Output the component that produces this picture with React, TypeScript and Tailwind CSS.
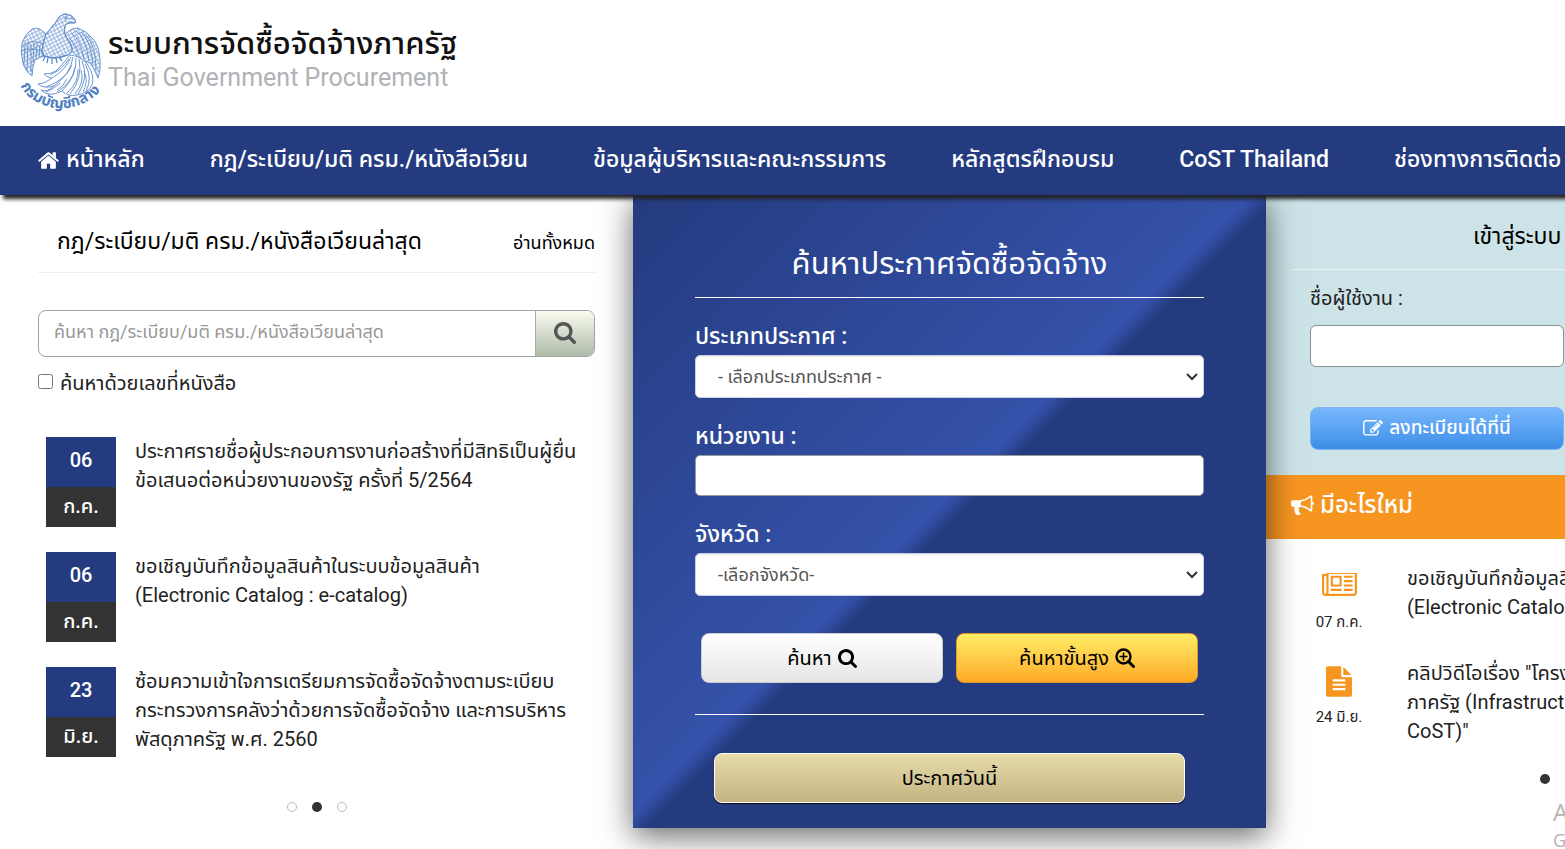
import type { ReactNode } from "react";

const ICONS = {
  home: {
    box: "0 0 1792 1792",
    d: "M1472 992v480q0 26-19 45t-45 19h-384v-384h-256v384h-384q-26 0-45-19t-19-45v-480q0-1 .5-3t.5-3l575-474 575 474q1 2 1 6zm223-69l-62 74q-8 9-21 11h-3q-13 0-21-7l-692-577-692 577q-12 8-24 7-13-2-21-11l-62-74q-8-10-7-23.500t11-21.500l719-599q32-26 76-26t76 26l244 204v-195q0-14 9-23t23-9h192q14 0 23 9t9 23v408l219 182q10 8 11 21.500t-7 23.500z",
  },
  search: {
    box: "64 128 1664 1664",
    d: "M1216 832q0-185-131.500-316.500t-316.500-131.500-316.500 131.500-131.500 316.500 131.500 316.500 316.500 131.500 316.500-131.500 131.500-316.500zm512 832q0 52-38 90t-90 38q-54 0-90-38l-343-342q-179 124-399 124-143 0-273.500-55.500t-225-150-150-225-55.500-273.500 55.500-273.500 150-225 225-150 273.500-55.500 273.500 55.500 225 150 150 225 55.500 273.500q0 220-124 399l343 343q37 37 37 90z",
  },
  edit: {
    box: "0 128 1792 1536",
    d: "M888 1184l116-116-152-152-116 116v56h96v96h56zm440-720q-16-16-33 1l-350 350q-17 17-1 33t33-1l350-350q17-17 1-33zm80 594v190q0 119-84.500 203.500t-203.500 84.500h-832q-119 0-203.500-84.500t-84.500-203.500v-832q0-119 84.500-203.500t203.500-84.500h832q63 0 117 25 15 7 18 23 3 17-9 29l-49 49q-14 14-32 8-23-6-45-6h-832q-66 0-113 47t-47 113v832q0 66 47 113t113 47h832q66 0 113-47t47-113v-126q0-13 9-22l64-64q15-15 35-7t20 29zm-96-738l288 288-672 672h-288v-288zm444 132l-92 92-288-288 92-92q28-28 68-28t68 28l152 152q28 28 28 68t-28 68z",
  },
  bullhorn: {
    box: "0 128 1792 1600",
    d: "M1664 640q53 0 90.500 37.500t37.500 90.500-37.500 90.500-90.500 37.500v384q0 52-38 90t-90 38q-417-347-812-380-58 19-91 66t-31 100.500 40 92.500q-20 33-23 65.500t6 58 33.500 55 48 50 61.500 50.500q-29 58-111.500 83t-168.500 11.500-132-55.500q-7-23-29.500-87.500t-32-94.500-23-89-15-101 3.500-98.500 22-110.500h-122q-66 0-113-47t-47-113v-192q0-66 47-113t113-47h480q435 0 896-384 52 0 90 38t38 90v384zm-128 604v-954q-394 302-768 343v270q377 42 768 341z",
  },
  newspaper: {
    box: "0 256 2048 1408",
    d: "M1024 512h-384v384h384v-384zm128 640v128h-640v-128h640zm0-768v640h-640v-640h640zm640 768v128h-512v-128h512zm0-256v128h-512v-128h512zm0-256v128h-512v-128h512zm0-256v128h-512v-128h512zm-1536 992v-960h-128v960q0 26 19 45t45 19 45-19 19-45zm1664 0v-1088h-1536v1088q0 33-11 64h1483q26 0 45-19t19-45zm128-1216v1216q0 80-56 136t-136 56h-1664q-80 0-136-56t-56-136v-1088h256v-128h1792z",
  },
  file: {
    box: "128 0 1536 1792",
    d: "M1596 476q14 14 28 36h-472v-472q22 14 36 28zm-476 164h544v1056q0 40-28 68t-68 28h-1344q-40 0-68-28t-28-68v-1600q0-40 28-68t68-28h800v544q0 40 28 68t68 28zm160 736v-64q0-14-9-23t-23-9h-704q-14 0-23 9t-9 23v64q0 14 9 23t23 9h704q14 0 23-9t9-23zm0-256v-64q0-14-9-23t-23-9h-704q-14 0-23 9t-9 23v64q0 14 9 23t23 9h704q14 0 23-9t9-23zm0-256v-64q0-14-9-23t-23-9h-704q-14 0-23 9t-9 23v64q0 14 9 23t23 9h704q14 0 23-9t9-23z",
  },
};

function Icon({ name, className }: { name: keyof typeof ICONS; className: string }) {
  return (
    <svg viewBox={ICONS[name].box} className={className} fill="currentColor" aria-hidden="true">
      <path d={ICONS[name].d} />
    </svg>
  );
}

function SearchPlusIcon() {
  return (
    <svg viewBox="0 0 20 20" className="h-5 w-5" fill="none" stroke="currentColor" aria-hidden="true">
      <circle cx="8.500" cy="8.500" r="7" strokeWidth="2.400" />
      <path d="M13.500 13.500l5 5" strokeWidth="3" strokeLinecap="round" />
      <path d="M8.500 4.500v8M4.500 8.500h8" strokeWidth="1.600" />
    </svg>
  );
}

function Emblem() {
  return (
    <svg viewBox="0 0 110 115" className="h-[115px] w-[110px] shrink-0" fill="none" stroke="#5f8ccb" strokeWidth="0.9">
      <defs>
        <pattern id="scales" width="5" height="5" patternUnits="userSpaceOnUse" patternTransform="rotate(18)">
          <path d="M0 0q2.500 5 5 0M-2.500 2.500q2.500 5 5 0M2.500 2.500q2.500 5 5 0" strokeWidth="0.8" />
        </pattern>
        <path id="arc" d="M10 80Q17 93 31 99Q53 108 74 98Q92 89 101 72" />
      </defs>
      {/* wings */}
      <path d="M36 29Q29 21 22 24Q15 29 12 38Q10 47 13 58Q15 66 22 71L23 62L25 55L31 52L39 50L47 40Z" fill="url(#scales)" />
      <path d="M55 30Q60 23 68 23Q77 26 84 35Q90 44 90 56Q91 65 88 73L84 64L80 58L74 56L66 50L57 42Z" fill="url(#scales)" />
      <path d="M13 40Q21 34 34 39M12 46Q20 42 32 46M15 40l-1 19M18 38l-1 28M21 39l0 28M24 38l-1 20M27 39l-1 15M30 40l-1 12M33 40l-1 11" />
      <path d="M66 26Q76 33 79 56M71 27Q81 36 83 60M76 30Q86 40 86 66M62 28Q71 36 74 54M59 33Q67 40 69 50" />
      {/* head, neck and body */}
      <path d="M65 15Q62 9 54 9Q48 11 46 17Q41 23 36 29Q33 37 32 45L34 51Q46 55 58 50Q66 46 59 36Q53 29 55 21Q57 17 65 18Z" fill="#fff" />
      <path d="M65 15Q62 9 54 9Q48 11 46 17Q41 23 36 29Q33 37 32 45L34 51Q46 55 58 50Q66 46 59 36Q53 29 55 21Q57 17 65 18Z" fill="url(#scales)" />
      <path d="M58 14q4-1 7 1q0 2 0 3q-3-2-7-1" fill="#fff" />
      <circle cx="56" cy="13" r="0.9" fill="#5f8ccb" />
      {/* talons */}
      <path d="M33 50Q42 56 56 50M35 52l-2 4M38 53l-1 5M42 54l0 5M46 53l1 5M49 52l3 4" strokeWidth="1.300" />
      {/* tail plumes */}
      <path
        d="M60 50Q52 60 46 66Q41 69 34 69Q38 73 42 73Q35 79 28 79Q33 84 44 81Q37 88 31 85Q39 93 52 86Q58 92 67 90Q78 88 82 80Q85 72 78 60Q71 51 60 50Z"
        fill="#fff"
      />
      <path d="M61 52Q57 64 42 73M63 52Q61 68 44 81M66 53Q67 71 52 86M69 54Q73 73 60 89M72 56Q79 73 68 89M75 59Q83 73 76 86M59 54Q53 64 40 70M62 60Q57 74 36 82M65 62Q63 77 47 87M68 64Q69 77 57 88M71 65Q75 77 65 89M74 66Q79 76 73 87M50 78Q44 84 36 87M57 74Q53 82 47 85" />
      <text fill="#4f7fc2" stroke="none" fontSize="15" fontWeight="bold" fontFamily="'Noto Sans Thai', 'Noto Sans', sans-serif">
        <textPath href="#arc" startOffset="1">กรมบัญชีกลาง</textPath>
      </text>
    </svg>
  );
}

const NAV = [
  "กฎ/ระเบียบ/มติ ครม./หนังสือเวียน",
  "ข้อมูลผู้บริหารและคณะกรรมการ",
  "หลักสูตรฝึกอบรม",
  "CoST Thailand",
  "ช่องทางการติดต่อ",
];

const RULES = [
  { day: "06", month: "ก.ค.", lines: ["ประกาศรายชื่อผู้ประกอบการงานก่อสร้างที่มีสิทธิเป็นผู้ยื่น", "ข้อเสนอต่อหน่วยงานของรัฐ ครั้งที่ 5/2564"] },
  { day: "06", month: "ก.ค.", lines: ["ขอเชิญบันทึกข้อมูลสินค้าในระบบข้อมูลสินค้า", "(Electronic Catalog : e-catalog)"] },
  { day: "23", month: "มิ.ย.", lines: ["ซ้อมความเข้าใจการเตรียมการจัดซื้อจัดจ้างตามระเบียบ", "กระทรวงการคลังว่าด้วยการจัดซื้อจัดจ้าง และการบริหาร", "พัสดุภาครัฐ พ.ศ. 2560"] },
];

function Lines({ lines }: { lines: string[] }) {
  return (
    <a href="#" className="text-[20px] leading-[29px] whitespace-nowrap">
      {lines.map((line) => (
        <span key={line} className="block">
          {line}
        </span>
      ))}
    </a>
  );
}

function Field({ id, label, children }: { id: string; label: string; children: ReactNode }) {
  return (
    <div className="flex flex-col">
      <label htmlFor={id} className="text-[23px] leading-9 font-medium text-white">
        {label}
      </label>
      {children}
    </div>
  );
}

function Select({ id, option }: { id: string; option: string }) {
  return (
    <div className="relative">
      <select
        id={id}
        className="h-[43px] w-full appearance-none rounded-[5px] border border-[#ccd0e4] bg-white px-[22px] text-[18px] text-[#555] shadow-[inset_0_1px_1px_rgba(0,0,0,0.08)]"
      >
        <option>{option}</option>
      </select>
      <svg viewBox="0 0 12 8" className="pointer-events-none absolute top-[18px] right-[6px] h-2 w-3" fill="none" stroke="#333" strokeWidth="2">
        <path d="M1 1l5 5 5-5" />
      </svg>
    </div>
  );
}

export default function App() {
  return (
    <div className="min-h-screen overflow-hidden bg-white font-[Roboto,'Noto_Sans_Thai','Noto_Sans',sans-serif] text-[#222]">
      <div className="relative min-w-[1899px] pb-6">
        <header className="flex h-[126px] items-start pt-[5px] pl-[10px]">
          <Emblem />
          <div className="-ml-3 pt-5 whitespace-nowrap">
            <h1 className="text-[31px] leading-[38px] font-medium text-[#111]">ระบบการจัดซื้อจัดจ้างภาครัฐ</h1>
            <p className="text-[25px] leading-[30px] text-[#b1b2b6]">Thai Government Procurement</p>
          </div>
        </header>

        <nav className="relative z-20 flex h-[69px] items-center gap-[65px] bg-[#243b7f] pl-[37px] text-[23px] font-medium whitespace-nowrap text-white shadow-[3px_4px_4px_#222]">
          <a href="#" className="flex items-center gap-1.5">
            <Icon name="home" className="h-[23px] w-[23px]" />
            หน้าหลัก
          </a>
          {NAV.map((item) => (
            <a key={item} href="#">
              {item}
            </a>
          ))}
        </nav>

        <main className="grid grid-cols-3">
          {/* Latest rules */}
          <section className="px-[38px]">
            <div className="flex h-[78px] items-center justify-between border-b border-[#eee] pt-[18px] pl-[19px] whitespace-nowrap text-black">
              <h2 className="text-[23px]">กฎ/ระเบียบ/มติ ครม./หนังสือเวียนล่าสุด</h2>
              <a href="#" className="text-[18px]">อ่านทั้งหมด</a>
            </div>
            <form className="mt-[37px] flex h-[47px] overflow-hidden rounded-lg border border-[#a3a3a3]">
              <input
                aria-label="ค้นหา"
                placeholder="ค้นหา กฎ/ระเบียบ/มติ ครม./หนังสือเวียนล่าสุด"
                className="min-w-0 flex-1 px-[15px] pb-1 text-[18px] outline-none placeholder:text-[#999]"
              />
              <button type="button" aria-label="ค้นหา" className="flex w-[59px] items-center justify-center border-l border-[#aaa] bg-linear-to-b from-[#fafcf0] to-[#afbba9] pb-0.5 text-[#555]">
                <Icon name="search" className="h-[22px] w-[22px]" />
              </button>
            </form>
            <label className="mt-3 flex h-7 items-center gap-[7px] text-[20px]">
              <input type="checkbox" className="mb-1 h-[15px] w-[15px]" />
              ค้นหาด้วยเลขที่หนังสือ
            </label>
            <ul className="mt-10 flex flex-col gap-[25px] pl-2">
              {RULES.map((rule) => (
                <li key={rule.lines[0]} className="flex h-[90px] gap-[19px]">
                  <div className="flex w-[70px] shrink-0 flex-col text-center text-[20px] font-medium text-white">
                    <span className="flex h-[50px] items-center justify-center bg-[#243b7f] pb-1">{rule.day}</span>
                    <span className="flex h-10 items-center justify-center bg-[#333] pb-0.5">{rule.month}</span>
                  </div>
                  <Lines lines={rule.lines} />
                </li>
              ))}
            </ul>
            <div className="mt-[45px] flex justify-center gap-[15px]">
              <button type="button" aria-label="1" className="h-2.5 w-2.5 rounded-full border border-[#bbb]" />
              <button type="button" aria-label="2" className="h-2.5 w-2.5 rounded-full bg-[#333]" />
              <button type="button" aria-label="3" className="h-2.5 w-2.5 rounded-full border border-[#bbb]" />
            </div>
          </section>

          {/* Announcement search */}
          <section className="relative z-10 h-[633px] bg-[linear-gradient(135deg,#243b7f_0%,#3552aa_49%,#253b80_51%)] px-[62px] pt-[34px] shadow-[0_8px_30px_rgba(0,0,0,0.6)]">
            <h2 className="h-[69px] border-b border-white text-center text-[31px] leading-[70px] text-white">ค้นหาประกาศจัดซื้อจัดจ้าง</h2>
            <form className="mt-[21px] flex flex-col">
              <div className="flex flex-col gap-[21px]">
                <Field id="kind" label="ประเภทประกาศ :">
                  <Select id="kind" option="- เลือกประเภทประกาศ -" />
                </Field>
                <Field id="agency" label="หน่วยงาน :">
                  <input id="agency" className="h-[41px] rounded-[5px] border border-[#999] bg-white px-5 text-[18px]" />
                </Field>
                <Field id="province" label="จังหวัด :">
                  <Select id="province" option="-เลือกจังหวัด-" />
                </Field>
              </div>
              <div className="mt-[37px] grid grid-cols-2 gap-[13px] px-[6px] text-[20px] text-black">
                <button type="button" className="flex h-[50px] items-center justify-center gap-1.5 rounded-lg border border-[#ccc] bg-linear-to-b from-white to-[#e6e6e6]">
                  ค้นหา
                  <Icon name="search" className="h-[19px] w-[19px]" />
                </button>
                <button type="button" className="flex h-[50px] items-center justify-center gap-1.5 rounded-lg border border-[#e0952b] bg-linear-to-b from-[#ffee66] to-[#ffaa22]">
                  ค้นหาขั้นสูง
                  <SearchPlusIcon />
                </button>
              </div>
              <div className="mt-[31px] border-t border-white px-[19px] pt-[38px]">
                <button type="button" className="h-[50px] w-full rounded-lg border border-white bg-linear-to-b from-[#e8dcab] to-[#c3b383] text-[20px] text-black shadow-[0_1px_1px_#111]">
                  ประกาศวันนี้
                </button>
              </div>
            </form>
          </section>

          {/* Login and news */}
          <section>
            <div className="h-[280px] bg-[#cce3e7] px-[25px]">
              <h2 className="h-[75px] border-b border-[#eaeff0] pt-[10px] pl-[182px] text-[23px] leading-[64px] text-black">เข้าสู่ระบบ</h2>
              <div className="flex w-[273px] flex-col pt-[11px] pl-[19px]">
                <label htmlFor="user" className="text-[20px] leading-[34px]">ชื่อผู้ใช้งาน :</label>
                <input id="user" className="mt-[10px] h-[42px] rounded-md border border-[#8a8f92] bg-white px-3" />
                <button type="button" className="mt-10 flex h-[43px] items-center justify-center gap-1.5 rounded-lg border border-[#7fb2ee] bg-linear-to-b from-[#77b7fc] to-[#3c8ee8] text-[19px] font-medium whitespace-nowrap text-white">
                  <Icon name="edit" className="h-[17px] w-5" />
                  ลงทะเบียนได้ที่นี่
                </button>
              </div>
            </div>
            <h2 className="flex h-16 items-center gap-1.5 bg-[#f79521] pb-1 pl-[25px] text-[24px] font-medium text-white">
              <Icon name="bullhorn" className="h-[21px] w-[23px]" />
              มีอะไรใหม่
            </h2>
            <ul className="flex flex-col gap-2 pt-[25px] pl-[43px]">
              <li className="flex h-[87px]">
                <div className="mr-[38px] flex w-[60px] flex-col items-center text-[15px]">
                  <Icon name="newspaper" className="mt-[9px] h-[25px] w-[35px] text-[#f79521]" />
                  <span className="mt-[13px] whitespace-nowrap">07 ก.ค.</span>
                </div>
                <Lines lines={["ขอเชิญบันทึกข้อมูลสินค้าในระบบข้อมูลสินค้า", "(Electronic Catalog : e-catalog)"]} />
              </li>
              <li className="flex h-[87px]">
                <div className="mr-[38px] flex w-[60px] flex-col items-center text-[15px]">
                  <Icon name="file" className="mt-[7px] h-[31px] w-[26px] text-[#f79521]" />
                  <span className="mt-[9px] whitespace-nowrap">24 มิ.ย.</span>
                </div>
                <Lines lines={['คลิปวิดีโอเรื่อง "โครงการความโปร่งใสในการก่อสร้าง', "ภาครัฐ (Infrastructure Transparency Initiative :", 'CoST)"']} />
              </li>
            </ul>
            <div className="mt-[28px] flex justify-center pr-[75px]">
              <button type="button" aria-label="1" className="h-2.5 w-2.5 rounded-full bg-[#333]" />
            </div>
          </section>
        </main>

        <div className="absolute right-0 bottom-0 w-[346px] font-['Open_Sans',sans-serif] text-[#b4b4b4]">
          <p className="text-[24px] leading-8">Activate Windows</p>
          <p className="text-[18px] leading-6">Go to Settings to activate Windows.</p>
        </div>
      </div>
    </div>
  );
}
